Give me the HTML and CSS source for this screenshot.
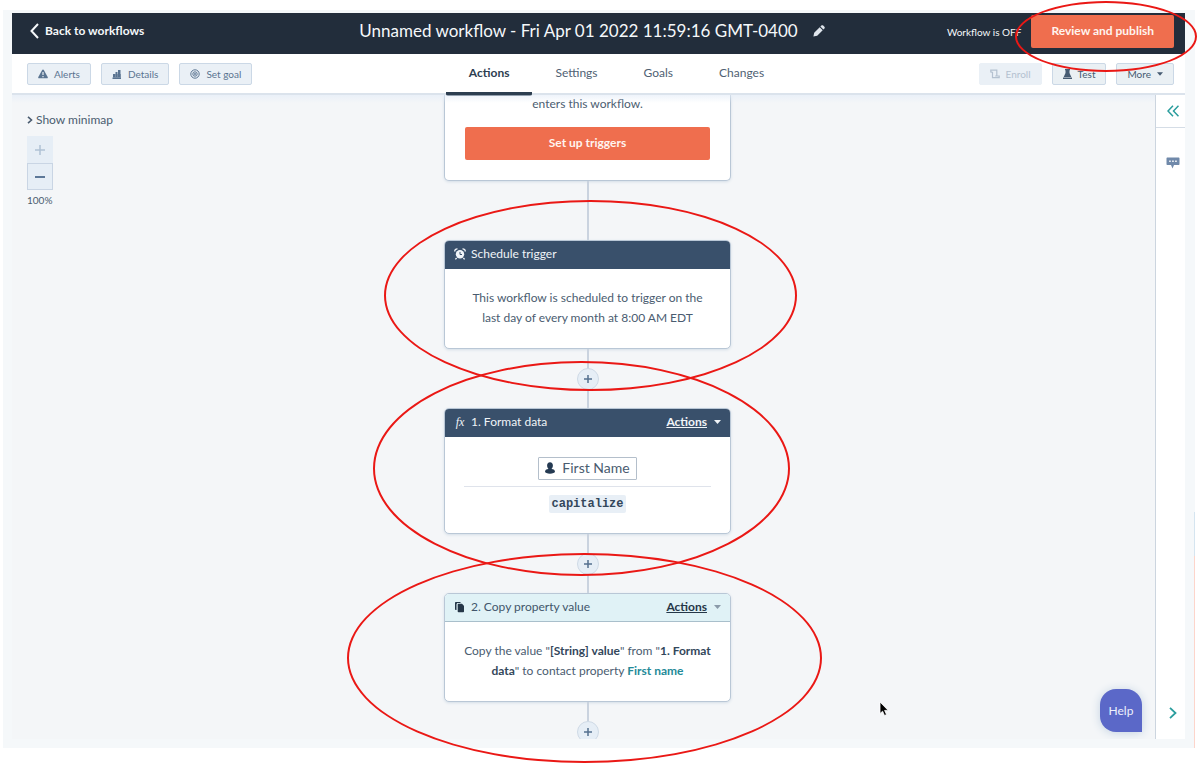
FILE: index.html
```
<!DOCTYPE html>
<html lang="en">
<head>
<meta charset="utf-8">
<meta name="viewport" content="width=device-width, initial-scale=1">
<title>Unnamed workflow</title>
<link rel="stylesheet" href="styles.css">
</head>
<body>
<div class="frame">
  <div class="app">
    <header class="topbar">
      <a class="back" href="#">
        <svg width="9" height="16" viewBox="0 0 9 16" fill="none" stroke="currentColor" stroke-width="2"><path d="M8 1 1.5 8 8 15"/></svg>
        Back to workflows
      </a>
      <div class="title">
        <h1>Unnamed workflow - Fri Apr 01 2022 11:59:16 GMT-0400</h1>
        <button class="icon-btn" aria-label="Edit name">
          <svg width="12" height="12" viewBox="0 0 12 12" fill="currentColor"><path d="M.4 11.600 1.200 7.800 6.700 2.300 9.700 5.300 4.200 10.800ZM7.400 1.600 8.400.6c.5-.5 1.300-.5 1.800 0l1.200 1.200c.5.5.5 1.300 0 1.800L10.400 4.600Z"/></svg>
        </button>
      </div>
      <div class="publish">
        <span>Workflow is OFF</span>
        <button class="btn-primary">Review and publish</button>
      </div>
    </header>

    <nav class="toolbar" aria-label="Workflow">
      <div class="group">
        <button class="btn">
          <svg width="10" height="10" viewBox="0 0 10 10"><path fill="currentColor" d="M5 .5c.4 0 .6.2.8.5l3.900 7c.3.700 0 1.300-.7 1.300H1c-.7 0-1-.6-.7-1.300l3.900-7C4.400.7 4.600.5 5 .5Z"/><path stroke="#eaf0f6" stroke-width="1.200" d="M5 3v3M5 7v1.200"/></svg>
          Alerts
        </button>
        <button class="btn">
          <svg width="10" height="10" viewBox="0 0 10 10" fill="currentColor"><path d="M1 5h2v3H1ZM3.500 3h2v5h-2ZM6 1h2.500v7H6ZM.5 8.500h8.500V10H.5Z"/><path d="M1 5h8v4H1Z" opacity=".6"/></svg>
          Details
        </button>
        <button class="btn">
          <svg width="10" height="10" viewBox="0 0 10 10" fill="none" stroke="currentColor"><circle cx="5" cy="5" r="4.200"/><circle cx="5" cy="5" r="2.200"/><circle cx="5" cy="5" r=".6"/></svg>
          Set goal
        </button>
      </div>
      <div class="tabs">
        <a class="tab active" href="#" aria-current="page">Actions</a>
        <a class="tab" href="#">Settings</a>
        <a class="tab" href="#">Goals</a>
        <a class="tab" href="#">Changes</a>
      </div>
      <div class="group end">
        <button class="btn" disabled>
          <svg width="10" height="10" viewBox="0 0 10 10" fill="none" stroke="currentColor" stroke-width="1.200"><path d="M.8 3.500V1.200h6v6M2.500 3v5.700h6.700V7H5.200M.8 3.200h1.700"/></svg>
          Enroll
        </button>
        <button class="btn dark">
          <svg width="9" height="10" viewBox="0 0 9 10" fill="currentColor"><path d="M2 0h5v1.300H6.500V4L8.300 8H.7L2.500 4V1.300H2ZM0 8.600h9V10H0Z"/></svg>
          Test
        </button>
        <button class="btn dark">More
          <svg width="6" height="4" viewBox="0 0 6 4" fill="currentColor"><path d="M0 .3h6L3 3.700Z"/></svg>
        </button>
      </div>
    </nav>

    <div class="workspace">
      <main class="canvas">
        <aside class="view-controls">
          <button class="minimap">
            <svg width="6" height="8" viewBox="0 0 6 8" fill="none" stroke="currentColor" stroke-width="1.600"><path d="M1 .8 4.500 4 1 7.200"/></svg>
            Show minimap
          </button>
          <button class="zoom" disabled aria-label="Zoom in">
            <svg width="10" height="10" viewBox="0 0 10 10" stroke="currentColor" stroke-width="1.500"><path d="M5 0v10M0 5h10"/></svg>
          </button>
          <button class="zoom" aria-label="Zoom out">
            <svg width="10" height="10" viewBox="0 0 10 10" stroke="currentColor" stroke-width="2"><path d="M0 5h10"/></svg>
          </button>
          <span class="level">100%</span>
        </aside>

        <div class="flow">
          <section class="card enrollment">
            <p>enters this workflow.</p>
            <button class="btn-primary">Set up triggers</button>
          </section>
          <div class="link"></div>

          <section class="card">
            <header class="card-head">
              <svg class="glyph" width="12" height="12" viewBox="0 0 12 12"><circle cx="6" cy="6.300" r="4.200" fill="currentColor"/><path d="M6 3.900v2.600h2" fill="none" stroke="#39506b"/><path d="M.7 3.400C.7 1.700 1.800.7 3.500.8M11.300 3.400C11.300 1.700 10.200.7 8.500.8M2.600 10 1.400 11.400M9.400 10l1.200 1.400" fill="none" stroke="currentColor" stroke-width="1.300"/></svg>
              <h2>Schedule trigger</h2>
            </header>
            <p class="card-body">This workflow is scheduled to trigger on the<br>last day of every month at 8:00 AM EDT</p>
          </section>
          <div class="link"><button class="add" aria-label="Add action"><svg width="8" height="8" viewBox="0 0 8 8" stroke="currentColor" stroke-width="1.500"><path d="M4 0v8M0 4h8"/></svg></button></div>

          <section class="card">
            <header class="card-head">
              <span class="glyph fx">fx</span>
              <h2>1. Format data</h2>
              <button class="menu"><span>Actions</span>
                <svg width="7" height="4" viewBox="0 0 7 4" fill="currentColor"><path d="M0 0h7L3.500 4Z"/></svg>
              </button>
            </header>
            <div class="card-body format">
              <span class="token">
                <svg width="10" height="12" viewBox="0 0 10 12" fill="currentColor"><path d="M5 .3c1.900 0 2.900 1.400 2.900 3.300 0 1.500-.6 2.700-1.400 3.400C8.700 7.200 10 8.200 10 9.600 10 11.100 7.600 11.700 5 11.700S0 11.100 0 9.600C0 8.200 1.300 7.200 3.500 7 2.700 6.300 2.100 5.100 2.100 3.600 2.100 1.700 3.100.3 5 .3Z"/></svg>
                First Name
              </span>
              <hr>
              <code>capitalize</code>
            </div>
          </section>
          <div class="link"><button class="add" aria-label="Add action"><svg width="8" height="8" viewBox="0 0 8 8" stroke="currentColor" stroke-width="1.500"><path d="M4 0v8M0 4h8"/></svg></button></div>

          <section class="card">
            <header class="card-head light">
              <svg class="glyph" width="12" height="12" viewBox="0 0 12 12" fill="currentColor"><path d="M2 1h4.500v1H4c-1 0-1.500.6-1.500 1.500V9H2C1.400 9 1 8.600 1 8V2c0-.6.4-1 1-1Z"/><path d="M4.500 2.800H8L10 4.800v5.700c0 .5-.3.8-.8.8H4.500c-.5 0-.8-.3-.8-.8V3.600c0-.5.3-.8.8-.8Z"/></svg>
              <h2>2. Copy property value</h2>
              <button class="menu"><span>Actions</span>
                <svg width="7" height="4" viewBox="0 0 7 4" fill="currentColor"><path d="M0 0h7L3.500 4Z"/></svg>
              </button>
            </header>
            <p class="card-body">Copy the value "<b>[String] value</b>" from "<b>1. Format<br>data</b>" to contact property <a href="#">First name</a></p>
          </section>
          <div class="link"><button class="add" aria-label="Add action"><svg width="8" height="8" viewBox="0 0 8 8" stroke="currentColor" stroke-width="1.500"><path d="M4 0v8M0 4h8"/></svg></button></div>
        </div>

        <button class="help">Help</button>
      </main>

      <aside class="rail">
        <button class="rail-btn collapse" aria-label="Expand panel">
          <svg width="12" height="12" viewBox="0 0 12 12" fill="none" stroke="currentColor" stroke-width="1.500"><path d="M6 .7 1 6l5 5.300M11.500.7l-5 5.300 5 5.300"/></svg>
        </button>
        <button class="rail-btn chat" aria-label="Comments">
          <svg width="14" height="12" viewBox="0 0 14 12"><path fill="currentColor" d="M1.500.5h11c.6 0 1 .4 1 1v5.500c0 .6-.4 1-1 1H8L6.500 11.500 5 8H1.500c-.6 0-1-.4-1-1V1.500c0-.6.4-1 1-1Z"/><path stroke="#fff" stroke-width="1.400" d="M3.200 4.300h1.500M6.200 4.300h1.500M9.200 4.300h1.500"/></svg>
        </button>
        <button class="rail-btn next" aria-label="Next">
          <svg width="8" height="12" viewBox="0 0 8 12" fill="none" stroke="currentColor" stroke-width="1.800"><path d="M1 .8 6.500 6 1 11.200"/></svg>
        </button>
      </aside>
    </div>
  </div>
</div>

<div class="ring ring-publish"></div>
<div class="ring ring-schedule"></div>
<div class="ring ring-format"></div>
<div class="ring ring-copy"></div>
<svg class="cursor" width="10" height="16" viewBox="0 0 10 16"><path d="M1 1v11.500l2.600-2.300 1.900 4.300 2-.9-1.900-4.200H9.200Z" fill="#000" stroke="#fff" stroke-width=".8"/></svg>
</body>
</html>
```
FILE: styles.css
```
* { box-sizing: border-box; }

body {
  margin: 0;
  position: relative;
  display: flex;
  height: 100vh;
  overflow: hidden;
  padding: 10px 3px 16px;
  background: #fff;
  color: #4a5c70;
  font-family: Lato, "Open Sans", sans-serif;
  font-size: 12px;
  line-height: 20px;
}

h1, h2, p { margin: 0; font-weight: 400; }
a { text-decoration: none; }

button {
  display: inline-flex;
  align-items: center;
  justify-content: center;
  margin: 0;
  padding: 0;
  border: 0;
  background: none;
  color: inherit;
  font: inherit;
}

svg { flex: none; display: block; }

.frame {
  flex: 1;
  min-width: 0;
  display: flex;
  padding: 3px 10px 9px 9px;
  background:
    linear-gradient(transparent 68%, #d5e5f0 68% 74%, #fdd5cb 74%) right / 1px 100% no-repeat,
    #f5f8fa;
}

.app { flex: 1; min-width: 0; display: flex; flex-direction: column; }

/* Top bar */
.topbar {
  display: grid;
  grid-template-columns: 1fr auto 1fr;
  align-items: center;
  padding: 2px 11px 6px 18px;
  background: #222d3b;
  color: #f5f8fa;
}
.back { display: flex; align-items: center; gap: 6px; padding-bottom: 2px; color: inherit; font-weight: 700; }
.title { display: flex; align-items: center; gap: 15px; margin-right: 20px; padding-bottom: 2px; }
.title h1 { font-size: 17px; white-space: nowrap; }
.icon-btn { color: #dfe5ec; }
.publish { display: flex; align-items: center; justify-content: flex-end; gap: 10px; font-size: 10px; white-space: nowrap; }

.btn-primary {
  height: 33px;
  padding: 0 20px 2px;
  border-radius: 2px;
  background: #ef6e4e;
  color: #fff4ef;
  font-size: 12px;
  font-weight: 700;
}

/* Toolbar */
.toolbar {
  position: relative;
  z-index: 1;
  display: grid;
  grid-template-columns: 1fr auto 1fr;
  align-items: center;
  height: 41px;
  padding: 0 11px 0 15px;
  border-bottom: 2px solid #dbe3ec;
  background: #fff;
}
.toolbar::after {
  content: "";
  position: absolute;
  inset: calc(100% + 2px) 30px auto 0;
  height: 8px;
  background: linear-gradient(#e3ecf899, #e3ecf800);
  pointer-events: none;
}
.group { display: flex; gap: 10px; }
.end { justify-content: flex-end; }

.btn {
  gap: 6px;
  height: 22px;
  padding: 0 10px;
  border: 1px solid #cbd8e6;
  border-radius: 2px;
  background: #eaf0f6;
  color: #5a7491;
  font-size: 10px;
}
.btn.dark { background: #eaf0f4; color: #465b72; }
.btn:disabled { border-color: #eaf0f6; color: #b4c1d0; }

.tabs { display: flex; align-self: stretch; margin: 0 0 -3px 32px; }
.tab {
  display: flex;
  align-items: center;
  padding: 0 23px;
  border-bottom: 4px solid transparent;
  border-radius: 2px;
  color: #4f6173;
}
.tab.active { border-color: #2d3e50; color: #2d3e50; font-weight: 700; }

/* Workspace */
.workspace { flex: 1; min-height: 0; display: flex; }

.canvas {
  flex: 1;
  min-width: 0;
  overflow: hidden;
  display: grid;
  grid-template: minmax(0, 1fr) / 1fr auto 1fr;
  padding: 0 13px 0 15px;
  background: #f4f6f8;
}

.view-controls { display: flex; flex-direction: column; align-items: flex-start; padding-top: 15px; }
.minimap { gap: 3px; margin-bottom: 6px; }
.zoom {
  width: 26px;
  height: 27px;
  border: 1px solid #c9d5e4;
  background: #e6eef6;
  color: #5d7898;
}
.zoom:disabled { border-color: #e6eef6; color: #b0c2d5; }
.level { font-size: 10px; }

.flow { width: 287px; margin-left: 6px; }

.card {
  border: 1px solid #b9c7d6;
  border-radius: 5px;
  background: #fff;
  box-shadow: 0 1px 3px #d3dde7;
  text-align: center;
}
.card-head {
  display: flex;
  align-items: center;
  gap: 5px;
  height: 28px;
  padding: 0 9px 2px;
  border-radius: 4px 4px 0 0;
  background: #39506b;
  color: #f0f4f8;
}
.card-head h2 { font-size: 12px; }
.card-head.light { border-bottom: 1px solid #a9bfcb; background: #e0f2f6; color: #42566b; }
.glyph { width: 12px; }
.light .glyph, .light .menu span { color: #253748; }
.fx { font: italic 400 12px/20px "Liberation Serif", serif; }
.menu { gap: 7px; margin-left: auto; font-size: 12px; font-weight: 700; }
.menu span { text-decoration: underline; }
.light .menu { color: #8a9aa9; }

.card-body { padding: 19px 19px 20px; }
.card-body b { color: #33475b; }
.card-body a { color: #238a98; font-weight: 700; }

.enrollment {
  padding: 0 20px 20px;
  border-top: 0;
  border-radius: 0 0 5px 5px;
}
.enrollment .btn-primary { width: 100%; margin-top: 13px; }
.enrollment p { height: 19px; line-height: 18px; }

.format { display: flex; flex-direction: column; align-items: center; padding-top: 20px; }
.token {
  display: flex;
  align-items: center;
  gap: 7px;
  height: 23px;
  padding: 0 6px 1px;
  border: 1px solid #b4bfcb;
  border-radius: 1px;
  font-size: 14px;
}
.token svg { color: #253a52; }
.format hr { width: 100%; margin: 6px 0 8px; border: 0; border-top: 1px solid #dfe3eb; }
code {
  padding: 0 2px;
  border-radius: 2px;
  background: #e8eff6;
  color: #33475b;
  font: 700 12px/18px "Liberation Mono", monospace;
}

.link {
  display: flex;
  align-items: center;
  justify-content: center;
  height: 59px;
  background: linear-gradient(#cad3df, #cad3df) center / 2px 100% no-repeat;
}
.add {
  width: 22px;
  height: 22px;
  border: 1px solid #cfdae6;
  border-radius: 50%;
  background: #e6eef6;
  color: #54708f;
}

.help {
  place-self: end;
  width: 42px;
  height: 43px;
  margin-bottom: 7px;
  border-radius: 16px 16px 0 16px;
  background: #5b68c8;
  box-shadow: 0 1px 10px #c3d2e2;
  color: #eef0fc;
}

/* Right rail */
.rail {
  display: flex;
  flex-direction: column;
  width: 30px;
  border-left: 1px solid #ccd5df;
  background: #fff;
}
.rail-btn { height: 33px; padding-left: 5px; color: #2a9d9d; }
.collapse { border-bottom: 1px solid #d5dde6; }
.chat { height: 70px; color: #7089aa; }
.next { margin: auto 0 10px; }

/* Highlights over the page */
.ring {
  position: absolute;
  z-index: 2;
  border: 2px solid #ea1815;
  border-radius: 50%;
  pointer-events: none;
}
.ring-publish { top: 1px; right: 1px; width: 182px; height: 71px; }
.ring-schedule { top: 200px; left: calc(50% - 215px); width: 413px; height: 191px; }
.ring-format { top: 361px; left: calc(50% - 226px); width: 417px; height: 215px; }
.ring-copy { top: 553px; left: calc(50% - 252px); width: 475px; height: 210px; }
.cursor { position: absolute; z-index: 2; top: 701px; left: calc(50% + 280px); }
```
